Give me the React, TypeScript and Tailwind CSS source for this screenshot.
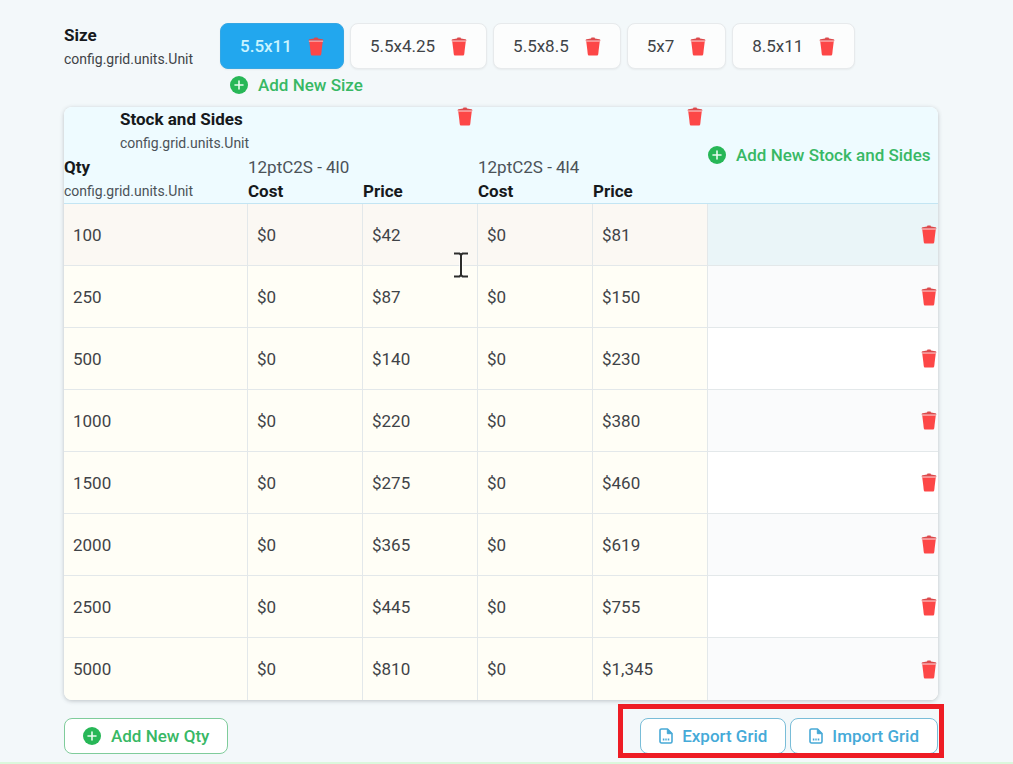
import { clsx } from "clsx";
import type { ReactNode } from "react";

const UNIT_LABEL = "config.grid.units.Unit";

const sizes = ["5.5x11", "5.5x4.25", "5.5x8.5", "5x7", "8.5x11"];

const stocks = ["12ptC2S - 4l0", "12ptC2S - 4l4"];

const rows = [
  { qty: 100, cells: ["$0", "$42", "$0", "$81"] },
  { qty: 250, cells: ["$0", "$87", "$0", "$150"] },
  { qty: 500, cells: ["$0", "$140", "$0", "$230"] },
  { qty: 1000, cells: ["$0", "$220", "$0", "$380"] },
  { qty: 1500, cells: ["$0", "$275", "$0", "$460"] },
  { qty: 2000, cells: ["$0", "$365", "$0", "$619"] },
  { qty: 2500, cells: ["$0", "$445", "$0", "$755"] },
  { qty: 5000, cells: ["$0", "$810", "$0", "$1,345"] },
];

function TrashIcon() {
  return (
    <svg width="16" height="19" viewBox="0 0 16 19" aria-hidden="true">
      <path d="M6 1.400 6.500.5h3l.5.9 4.400.9c.6.1.9.4.9.9v.6H.7v-.6c0-.5.3-.8.9-.9z" fill="#dc4a4c" />
      <path d="M.9 3.600h14.200v1.400H.9z" fill="#fbaeae" />
      <path d="M1.300 4.800h13.400l-1.500 12.500c-.1.800-.6 1.200-1.400 1.200H4.200c-.8 0-1.300-.4-1.400-1.200z" fill="#fd4747" />
    </svg>
  );
}

function PlusIcon() {
  return (
    <svg width="18" height="18" viewBox="0 0 18 18" aria-hidden="true" className="shrink-0">
      <circle cx="9" cy="9" r="9" fill="#27b757" />
      <path d="M9 5v8M5 9h8" stroke="#e9fbef" strokeWidth="1.6" strokeLinecap="round" />
    </svg>
  );
}

function FileIcon() {
  return (
    <svg width="14" height="16" viewBox="0 0 14 16" fill="none" stroke="#47a9d6" aria-hidden="true" className="shrink-0">
      <path d="M2.500 1h6l4.500 4.500v8c0 .8-.6 1.500-1.500 1.500h-9C1.600 15 1 14.300 1 13.500v-11C1 1.600 1.600 1 2.500 1z" strokeWidth="1.6" strokeLinejoin="round" />
      <path d="M8.300 1.200v4.500h4.500z" fill="#47a9d6" strokeWidth="1" strokeLinejoin="round" />
      <path d="M3.800 11.500h1.600M6.300 11.500h1.400M8.700 11.500h1.600" strokeWidth="2" />
    </svg>
  );
}

function DeleteButton({ label }: { label: string }) {
  return (
    <button type="button" aria-label={label} className="block shrink-0">
      <TrashIcon />
    </button>
  );
}

function AddButton({ children, outlined }: { children: ReactNode; outlined?: boolean }) {
  return (
    <button
      type="button"
      className={clsx(
        "flex items-center gap-[10px] font-medium whitespace-nowrap text-[#38b865]",
        outlined && "h-9 rounded-lg border border-[#7fcc9b] bg-white px-[18px]",
      )}
    >
      <PlusIcon />
      {children}
    </button>
  );
}

function GridButton({ children }: { children: ReactNode }) {
  return (
    <button
      type="button"
      className="flex h-9 items-center gap-[9px] rounded-lg border border-[#79bdd8] bg-white px-[18px] font-medium whitespace-nowrap text-[#45aad8]"
    >
      <FileIcon />
      {children}
    </button>
  );
}

function TextCursor() {
  return (
    <svg width="16" height="26" viewBox="0 0 16 26" aria-hidden="true" className="absolute top-12 right-2 z-10">
      <path d="M1 1.500h14M1 24.500h14M8 1.500v23" fill="none" stroke="#fff" strokeWidth="4" opacity=".7" />
      <path d="M1 1.500h5.500L8 3l1.500-1.500H15M1 24.500h5.500L8 23l1.500 1.500H15M8 3v20" fill="none" stroke="#2c2c2a" strokeWidth="2" />
    </svg>
  );
}

export default function App() {
  return (
    <main className="min-h-screen border-b-2 border-[#dbf8dc] bg-[#f3f8fa] pt-[23px] pr-[75px] pb-2 pl-16 font-[Roboto,sans-serif] text-[17px] leading-6 text-[#3f4347]">
      <section className="flex">
        <div className="w-[156px] shrink-0">
          <h2 className="font-bold text-[#16191c]">Size</h2>
          <p className="text-sm leading-6">{UNIT_LABEL}</p>
        </div>
        <div>
          <div className="flex flex-wrap gap-[6px]">
            {sizes.map((size, index) => (
              <div
                key={size}
                className={clsx(
                  "flex h-[46px] items-center gap-4 rounded-lg border px-[19px] shadow-xs",
                  index === 0 ? "border-[#35a7e4] bg-[#22a7ee] text-[#c9f4ff]" : "border-[#e7eaec] bg-[#fcfdfd]",
                )}
              >
                <button type="button" className={clsx(index === 0 && "font-medium")}>
                  {size}
                </button>
                <DeleteButton label={`Delete size ${size}`} />
              </div>
            ))}
          </div>
          <div className="mt-1 pl-[10px]">
            <AddButton>Add New Size</AddButton>
          </div>
        </div>
      </section>

      <div className="mt-[10px] overflow-hidden rounded-lg bg-white shadow-[0_1px_4px_rgba(60,70,80,0.3)]">
        <table className="w-full table-fixed border-separate border-spacing-0 text-left">
          <colgroup>
            <col className="w-[184px]" />
            <col className="w-[115px]" />
            <col className="w-[115px]" />
            <col className="w-[115px]" />
            <col className="w-[115px]" />
            <col />
          </colgroup>
          <thead className="bg-[#eefbff] text-[#16191c]">
            <tr className="h-12 align-top">
              <th className="pl-14 font-bold whitespace-nowrap">
                Stock and Sides
                <span className="block text-sm leading-6 font-normal text-[#4b5258]">{UNIT_LABEL}</span>
              </th>
              {stocks.map((stock) => (
                <th key={stock} colSpan={2} className="pr-[5px]">
                  <div className="flex justify-end">
                    <DeleteButton label={`Delete ${stock}`} />
                  </div>
                </th>
              ))}
              <th rowSpan={3} className="border-b border-[#c3e5f3] align-middle">
                <AddButton>Add New Stock and Sides</AddButton>
              </th>
            </tr>
            <tr className="h-6">
              <th rowSpan={2} className="border-b border-[#c3e5f3] font-bold">
                Qty
                <span className="block text-sm leading-6 font-normal text-[#4b5258]">{UNIT_LABEL}</span>
              </th>
              {stocks.map((stock) => (
                <th key={stock} colSpan={2} className="font-normal text-[#4b5258]">
                  {stock}
                </th>
              ))}
            </tr>
            <tr className="h-[25px]">
              {["Cost", "Price", "Cost", "Price"].map((name, index) => (
                <th key={index} className="border-b border-[#c3e5f3] font-bold">
                  {name}
                </th>
              ))}
            </tr>
          </thead>
          <tbody>
            {rows.map((row, index) => (
              <tr
                key={row.qty}
                className={clsx(
                  "h-[62px] *:border-[#e3e8ea] not-last:*:border-b",
                  index === 0 ? "bg-[#fbf8f3]" : "bg-[#fffef6]",
                )}
              >
                <td className="border-r pl-[9px]">{row.qty}</td>
                {row.cells.map((value, column) => (
                  <td key={column} className="relative border-r pl-[9px]">
                    {value}
                    {index === 0 && column === 1 && <TextCursor />}
                  </td>
                ))}
                <td
                  className={clsx(
                    "pr-[1px]",
                    index === 0 ? "bg-[#eaf5f8]" : index % 2 === 1 ? "bg-[#fafbfc]" : "bg-white",
                  )}
                >
                  <div className="flex justify-end">
                    <DeleteButton label={`Delete quantity ${row.qty}`} />
                  </div>
                </td>
              </tr>
            ))}
          </tbody>
        </table>
      </div>

      <footer className="mt-[18px] flex items-center justify-between">
        <AddButton outlined>Add New Qty</AddButton>
        <div className="relative flex gap-1">
          <GridButton>Export Grid</GridButton>
          <GridButton>Import Grid</GridButton>
          <div className="pointer-events-none absolute -top-[14px] -right-[6px] -bottom-[4px] -left-[22px] border-5 border-[#ee1c24]" />
        </div>
      </footer>
    </main>
  );
}
